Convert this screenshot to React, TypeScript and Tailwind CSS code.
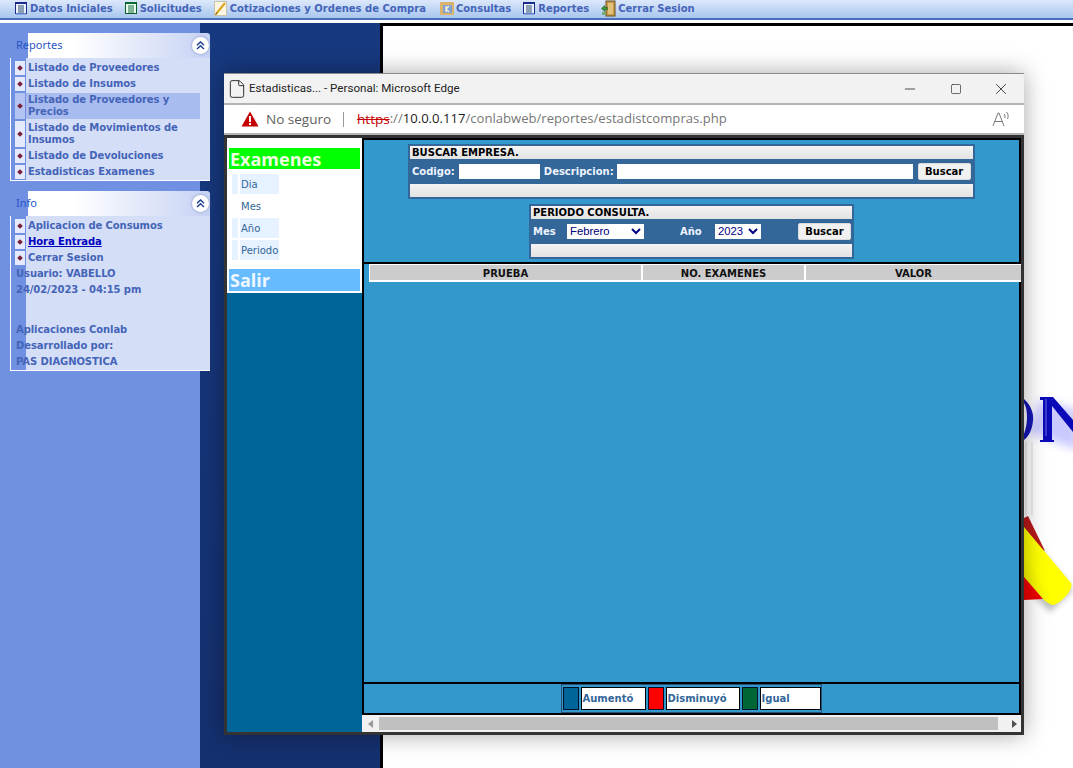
import { File, Minus, Square, X } from 'lucide-react';

const menuFont = "font-['DejaVu_Sans',sans-serif]";

function BookIcon() {
  return (
    <svg width="12" height="13" viewBox="0 0 12 13" className="shrink-0">
      <rect x="0.5" y="0.5" width="11" height="11" fill="#eef4ff" stroke="#1a2a8a" />
      <rect x="1" y="0" width="10" height="2" fill="#1a2a8a" />
      <path d="M3 4h6M3 6h6M3 8h6M3 10h6" stroke="#2a4a6a" />
      <rect x="1" y="11" width="10" height="1.5" fill="#5f7fd0" />
    </svg>
  );
}

function GreenBookIcon() {
  return (
    <svg width="12" height="13" viewBox="0 0 12 13" className="shrink-0">
      <rect x="0.5" y="0.5" width="11" height="11" fill="#e8fff0" stroke="#0a5a2a" />
      <rect x="1" y="0" width="10" height="2" fill="#0a6a30" />
      <path d="M3 4h6M3 6h6M3 8h6M3 10h6" stroke="#1a6a3a" />
    </svg>
  );
}

function PencilIcon() {
  return (
    <svg width="13" height="15" viewBox="0 0 13 15" className="shrink-0">
      <rect x="0.5" y="0.5" width="12" height="14" fill="#fbf6e2" stroke="#c9c3a8" />
      <path d="M2 13 L11 2" stroke="#d9a520" strokeWidth="2" />
      <path d="M1.5 14 L3 11.5" stroke="#7a5a10" strokeWidth="1" />
    </svg>
  );
}

function KeyIcon() {
  return (
    <svg width="14" height="15" viewBox="0 0 14 15" className="shrink-0">
      <rect x="0" y="1" width="14" height="13" rx="1" fill="#d9b26e" />
      <rect x="3" y="4" width="9" height="8" fill="#7fa0d0" />
      <path d="M6 5v6M6 8l3-3M6 8l3 3" stroke="#f5f0d8" strokeWidth="1.4" fill="none" />
    </svg>
  );
}

function DoorIcon() {
  return (
    <svg width="15" height="17" viewBox="0 0 15 17" className="shrink-0">
      <rect x="5" y="1" width="9" height="15" fill="#c99a4a" stroke="#6a5020" />
      <rect x="7" y="3" width="5" height="11" fill="#e2c27a" />
      <path d="M0.5 8.5l3-3v2h3v2h-3v2z" fill="#3c9a3c" stroke="#1f5f1f" strokeWidth="0.6" />
      <rect x="1" y="12" width="4" height="3" fill="#6fae6f" />
    </svg>
  );
}

function NavItem({ icon, label, gap }: { icon: React.ReactNode; label: string; gap?: string }) {
  return (
    <div className={`flex items-center ${gap ?? 'gap-[3px]'}`}>
      {icon}
      <span className="text-[10px] font-bold text-[#4464b8] whitespace-nowrap">{label}</span>
    </div>
  );
}

function Collapse() {
  return (
    <div className="w-[17px] h-[17px] rounded-full bg-white flex items-center justify-center shadow-[0_0_3px_#8090c0]">
      <svg width="9" height="9" viewBox="0 0 9 9" fill="none" stroke="#1f3f8f" strokeWidth="1.5">
        <path d="M1 4.2L4.5 1L8 4.2M1 8L4.5 4.8L8 8" />
      </svg>
    </div>
  );
}

function SideRow({ label, active, underline, tall }: { label: string; active?: boolean; underline?: boolean; tall?: boolean }) {
  return (
    <div className={`flex items-stretch ${tall ? 'h-[28px]' : 'h-[16px]'}`}>
      <div className={`w-[10px] ml-[4px] my-px shrink-0 flex items-center justify-center ${active ? 'bg-[#b4c4f2]' : 'bg-[#e4eafb]'}`}>
        <span className="w-[4px] h-[4px] bg-[#7a1f3a] rotate-45" />
      </div>
      <div className={`flex-1 ml-px mr-[10px] my-px pl-[2px] flex items-center text-[10px] leading-[12px] font-bold tracking-[-0.08px] ${active ? 'bg-[#a9bcf0]' : ''} ${underline ? 'text-[#0000c0] underline' : 'text-[#4464b8]'}`}>
        <span>{label}</span>
      </div>
    </div>
  );
}

function PlainRow({ label }: { label: string }) {
  return <div className="h-[16px] pl-[5px] pb-[2px] flex items-center text-[10px] font-bold tracking-[-0.08px] text-[#4464b8] whitespace-nowrap">{label}</div>;
}

function SidePanel({ title, children }: { title: string; children: React.ReactNode }) {
  return (
    <div className="ml-[10px] w-[200px] relative">
      <div className="ml-[18px] h-[25px] rounded-tr-[3px] bg-[linear-gradient(to_right,#ffffff_25%,#c6d2f4)] flex items-center justify-end pr-[1px]">
        <Collapse />
      </div>
      <span className="absolute left-[6px] top-[4px] text-[11px] font-['Noto_Sans',sans-serif] text-[#2a55c5]">{title}</span>
      <div className="pt-[2px] border-l border-b border-white bg-[linear-gradient(to_right,transparent_15px,#d5def7_15px)]">{children}</div>
    </div>
  );
}

function Fila({ children, className }: { children?: React.ReactNode; className?: string }) {
  return <div className={`bg-[linear-gradient(to_bottom,#f4f4f4,#e2e2e2)] ${className ?? ''}`}>{children}</div>;
}

function BuscarBtn() {
  return (
    <button className="w-[53px] h-[17px] bg-[#f1f1f1] rounded-[2px] text-[10px] font-bold text-black border border-[#dcdcdc]">Buscar</button>
  );
}

function Combo({ value, width, options }: { value: string; width: string; options: string[] }) {
  return (
    <div className={`relative h-[15px] ${width}`}>
      <select defaultValue={value} className="appearance-none w-full h-full bg-white pl-[3px] text-[11.3px] leading-[15px] font-normal text-[#000080] font-['Liberation_Sans',sans-serif] outline-none">
        {options.map(o => <option key={o}>{o}</option>)}
      </select>
      <svg width="10" height="7" viewBox="0 0 10 7" fill="none" stroke="#000080" strokeWidth="2" className="absolute right-[3px] top-[4px] pointer-events-none">
        <path d="M1 1l4 4 4-4" />
      </svg>
    </div>
  );
}

function Legend({ color, label, w, sw }: { color: string; label: string; w: string; sw: string }) {
  return (
    <div className="flex items-stretch gap-[2px]">
      <div className={`${sw} border border-[#00112a]`} style={{ backgroundColor: color }} />
      <div className={`${w} bg-white border border-black flex items-center pl-px text-[10px] font-bold text-[#336699]`}>{label}</div>
    </div>
  );
}

function MenuItem({ label, plain }: { label: string; plain?: boolean }) {
  return (
    <div className="flex h-[20px] ml-[5px] gap-[2px]">
      <div className={`w-[6px] ${plain ? '' : 'bg-[#e6f2ff]'}`} />
      <div className={`w-[39px] pl-[1px] flex items-center text-[10px] text-[#336699] whitespace-nowrap ${plain ? '' : 'bg-[#e6f2ff]'}`}>{label}</div>
    </div>
  );
}

function PopupWindow() {
  return (
    <div className="absolute left-[224px] top-[73px] w-[800px] h-[662px] flex flex-col border-t border-[#8a8a8a] bg-[#333] shadow-[0_0_22px_rgba(0,0,0,0.35)]">
      <div className="h-[31px] bg-[#f2f2f2] flex items-center pl-[3px] border-b-2 border-[#b4b4b4] shrink-0">
        <File size={20} strokeWidth={1.1} className="text-[#222]" />
        <span className="ml-[2px] text-[11.6px] text-[#222] font-['Roboto',sans-serif]">Estadisticas... - Personal: Microsoft Edge</span>
        <div className="ml-auto flex items-center text-[#222]">
          <Minus size={16} strokeWidth={1.2} className="mr-[32px]" />
          <Square size={12} strokeWidth={1.3} className="mr-[30px]" />
          <X size={18} strokeWidth={1.1} className="mr-[14px]" />
        </div>
      </div>
      <div className="h-[30px] bg-white flex items-center pl-[17px] border-b-2 border-[#b4b4b4] shrink-0 font-['Open_Sans',sans-serif]">
        <svg width="18" height="16" viewBox="0 0 18 16">
          <path d="M9 0.5L17.5 15.5H0.5z" fill="#c40000" />
          <rect x="8" y="5" width="2" height="6" fill="#fff" />
          <rect x="8" y="12" width="2" height="2" fill="#fff" />
        </svg>
        <span className="ml-[7px] text-[13.5px] text-[#5f5f5f]">No seguro</span>
        <span className="ml-[12px] w-px h-[15px] bg-[#9a9a9a]" />
        <span className="ml-[13px] text-[13.5px] text-[#c40000] line-through">https</span>
        <span className="text-[13.1px] text-[#777]">://</span>
        <span className="text-[13.1px] text-[#222]">10.0.0.117</span>
        <span className="text-[13.1px] text-[#777]">/conlabweb/reportes/estadistcompras.php</span>
        <svg width="18" height="16" viewBox="0 0 18 16" fill="none" stroke="#777" strokeWidth="1" className="ml-auto mr-[14px]">
          <path d="M1 15L6 2h1l5 13M3 10.5h7" />
          <path d="M12 3c1.2 1 1.2 3 .6 4M14.5 1c2 2 2 5 1 7" />
        </svg>
      </div>
      <div className="flex-1 min-h-0 flex p-[3px]">
        <div className="w-[135px] bg-[#006699] shrink-0 flex flex-col">
          <div className="bg-white h-[155px] pt-[10px] px-[2px] flex flex-col">
            <div className="h-[21px] bg-[#00ff00] pl-px flex items-center text-[18px] font-bold font-['Open_Sans',sans-serif] text-[#eefde0] leading-none">Examenes</div>
            <div className="mt-[5px] flex flex-col gap-[2px] -ml-[2px]">
              <MenuItem label="Dia" />
              <MenuItem label="Mes" plain />
              <MenuItem label="Año" />
              <MenuItem label="Periodo" />
            </div>
            <div className="mt-[9px] h-[22px] bg-[#66bbff] pl-px flex items-center text-[18px] font-bold font-['Open_Sans',sans-serif] text-[#eef7ff] leading-none">Salir</div>
          </div>
        </div>
        <div className="flex-1 min-w-0 flex flex-col">
          <div className="flex-1 min-h-0 flex flex-col border-l-2 border-r-2 border-t-2 border-black bg-[#3399cc]">
            <div className="h-[122px] shrink-0 pt-[4px] flex flex-col">
              <div className="ml-[44px] w-[567px] h-[55px] border-2 border-[#336699] bg-[#336699] flex flex-col text-[10px] font-bold">
                <Fila className="h-[13px] pl-[2px] leading-[13px] text-black">BUSCAR EMPRESA.</Fila>
                <div className="flex-1 flex items-center text-[#eef4ff]">
                  <span className="ml-[2px]">Codigo:</span>
                  <input className="ml-[4px] w-[81px] h-[15px] bg-white" />
                  <span className="ml-[4px]">Descripcion:</span>
                  <input className="ml-[3px] w-[296px] h-[15px] bg-white" />
                  <span className="ml-[5px] flex"><BuscarBtn /></span>
                </div>
                <Fila className="h-[13px]" />
              </div>
              <div className="ml-[165px] mt-[5px] w-[325px] h-[55px] border-2 border-[#336699] bg-[#336699] flex flex-col text-[10px] font-bold">
                <Fila className="h-[13px] pl-[2px] leading-[13px] text-black">PERIODO CONSULTA.</Fila>
                <div className="flex-1 flex items-center text-[#eef4ff]">
                  <span className="ml-[2px] w-[34px]">Mes</span>
                  <Combo value="Febrero" width="w-[77px]" options={['Enero', 'Febrero', 'Marzo']} />
                  <span className="ml-[36px] w-[35px]">Año</span>
                  <Combo value="2023" width="w-[46px]" options={['2022', '2023']} />
                  <span className="ml-[37px] flex"><BuscarBtn /></span>
                </div>
                <Fila className="h-[13px]" />
              </div>
            </div>
            <div className="h-[2px] bg-black shrink-0" />
            <div className="flex-1 min-h-0">
              <div className="ml-[5px] -mr-[2px] bg-white pt-px pb-[2px] flex gap-[2px] pl-px text-[10px] font-bold text-[#111] text-center leading-[17px]">
                <div className="w-[271px] h-[15px] bg-[#cccccc]">PRUEBA</div>
                <div className="w-[161px] h-[15px] bg-[#cccccc]">NO. EXAMENES</div>
                <div className="flex-1 h-[15px] bg-[#cccccc]">VALOR</div>
              </div>
            </div>
            <div className="h-[2px] bg-black shrink-0" />
            <div className="h-[29px] shrink-0 flex justify-center pr-[1px]">
              <div className="w-[261px] border border-[#24507a] px-[1px] pt-[2px] pb-[2px] flex gap-[2px]">
                <Legend color="#006699" label="Aumentó" sw="w-[16px]" w="w-[65px]" />
                <Legend color="#ff0000" label="Disminuyó" sw="w-[16px]" w="w-[74px]" />
                <Legend color="#006633" label="Igual" sw="w-[16px]" w="w-[61px]" />
              </div>
            </div>
            <div className="h-[2px] bg-black shrink-0" />
          </div>
          <div className="h-[17px] bg-[#f1f1f1] flex items-stretch shrink-0 pr-[1px]">
            <div className="w-[17px] flex items-center justify-center">
              <span className="w-0 h-0 border-y-[4px] border-y-transparent border-r-[5px] border-r-[#999]" />
            </div>
            <div className="flex-1 my-[2px] bg-[#c0c0c0]" />
            <div className="w-[22px] flex items-center justify-end pr-[3px]">
              <span className="w-0 h-0 border-y-[4px] border-y-transparent border-l-[5px] border-l-[#505050]" />
            </div>
          </div>
        </div>
      </div>
    </div>
  );
}

function LogoScraps() {
  return (
    <svg width="49" height="230" viewBox="1024 390 49 230" className="absolute left-[1024px] top-[390px]">
      <defs>
        <filter id="glow" x="-50%" y="-50%" width="200%" height="200%"><feGaussianBlur stdDeviation="5" /></filter>
        <filter id="soft" x="-50%" y="-50%" width="200%" height="200%"><feGaussianBlur stdDeviation="3" /></filter>
        <linearGradient id="yel" x1="0" y1="1" x2="1" y2="0">
          <stop offset="0" stopColor="#e6e600" />
          <stop offset="0.35" stopColor="#ffff00" />
          <stop offset="1" stopColor="#ffff00" />
        </linearGradient>
      </defs>
      <path d="M1026 432 L1078 450 L1078 410 L1040 400z" fill="#8888ff" opacity="0.45" filter="url(#glow)" />
      <path d="M1024 399 C1031 405 1034 414 1033 421 C1032 431 1028 437 1024 440 L1024 434 C1026 428 1027 423 1027 418 C1027 411 1026 406 1024 403z" fill="#1515b5" />
      <path d="M1040 397 H1053 L1073 420 V432 L1052 406 V440 H1054 V442 H1040 V440 H1043 V400 H1040z" fill="#0a0ab8" />
      <path d="M1046 399 V436" stroke="#6a6ae0" strokeWidth="1" />
      <path d="M1026 442 V515 M1032 442 V515" stroke="#dddddd" strokeWidth="1" />
      <path d="M1024 530 L1073 590 L1050 612 L1024 585z" fill="#777" opacity="0.5" filter="url(#soft)" />
      <path d="M1028 516 L1045 551 L1024 540 L1024 518z" fill="#b81818" />
      <path d="M1024 574 L1043 599 L1024 600z" fill="#ee0000" />
      <path d="M1024 527 L1071 583 C1074 590 1060 604 1053 605 C1050 605 1047 602 1044 600 L1024 577z" fill="url(#yel)" />
    </svg>
  );
}

export default function App() {
  return (
    <div className={`relative w-[1073px] h-[768px] overflow-hidden bg-white flex flex-col ${menuFont}`}>
      <div className="h-[20px] shrink-0 border-b-2 border-[#4a6fbc] bg-[linear-gradient(to_bottom,#dce8fb,#a8c6ee)] flex items-center pl-[15px] pb-[1px] gap-[12px]">
        <NavItem icon={<BookIcon />} label="Datos Iniciales" />
        <NavItem icon={<GreenBookIcon />} label="Solicitudes" />
        <NavItem icon={<PencilIcon />} label="Cotizaciones y Ordenes de Compra" />
        <div className="ml-[2px]"><NavItem icon={<KeyIcon />} label="Consultas" gap="gap-[2px]" /></div>
        <NavItem icon={<BookIcon />} label="Reportes" />
        <NavItem icon={<DoorIcon />} label="Cerrar Sesion" gap="gap-[2px]" />
      </div>
      <div className="h-[3px] shrink-0 bg-white" />
      <div className="flex-1 min-h-0 flex">
        <aside className="w-[200px] shrink-0 relative z-10 bg-[#7090e2] pt-[10px] flex flex-col gap-[10px]">
          <SidePanel title="Reportes">
            <SideRow label="Listado de Proveedores" />
            <SideRow label="Listado de Insumos" />
            <SideRow label="Listado de Proveedores y Precios" active tall />
            <SideRow label="Listado de Movimientos de Insumos" tall />
            <SideRow label="Listado de Devoluciones" />
            <SideRow label="Estadisticas Examenes" />
          </SidePanel>
          <SidePanel title="Info">
            <SideRow label="Aplicacion de Consumos" />
            <SideRow label="Hora Entrada" underline />
            <SideRow label="Cerrar Sesion" />
            <PlainRow label="Usuario: VABELLO" />
            <PlainRow label="24/02/2023 - 04:15 pm" />
            <div className="h-[24px]" />
            <PlainRow label="Aplicaciones Conlab" />
            <PlainRow label="Desarrollado por:" />
            <PlainRow label="PAS DIAGNOSTICA" />
          </SidePanel>
        </aside>
        <div className="w-[180px] shrink-0 bg-[linear-gradient(to_bottom,#17397f,#14306f)]" />
        <div className="flex-1 border-l-[3px] border-t-[3px] border-black bg-white" />
      </div>
      <LogoScraps />
      <PopupWindow />
    </div>
  );
}
